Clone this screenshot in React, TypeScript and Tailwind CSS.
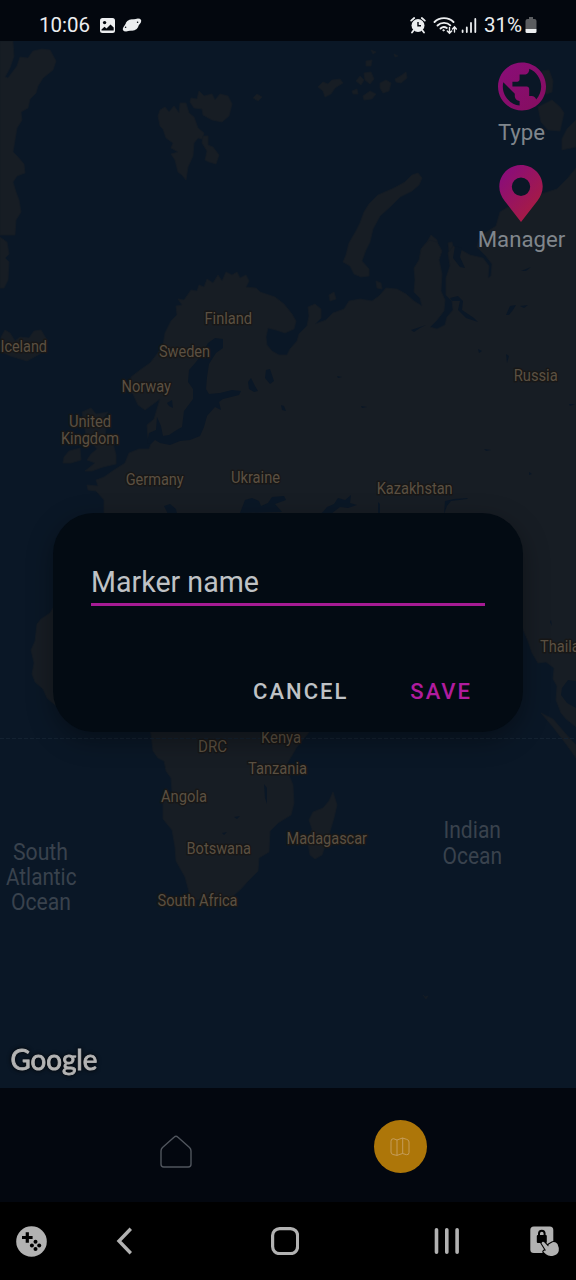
type Label = { text: string; x: number; y: number; w: number };

const COUNTRIES: Label[] = [
  { text: "Finland", x: 204.5, y: 324, w: 47.5 },
  { text: "Iceland", x: 0.5, y: 352, w: 46.5 },
  { text: "Sweden", x: 159, y: 357.4, w: 51 },
  { text: "Norway", x: 121.5, y: 392.3, w: 49.5 },
  { text: "United", x: 69, y: 427, w: 42 },
  { text: "Kingdom", x: 61, y: 444, w: 58 },
  { text: "Germany", x: 125.7, y: 485, w: 58 },
  { text: "Ukraine", x: 231, y: 483.3, w: 49 },
  { text: "Russia", x: 513.7, y: 381, w: 44 },
  { text: "Kazakhstan", x: 376.7, y: 493.5, w: 76 },
  { text: "Thailand", x: 540, y: 652, w: 56 },
  { text: "DRC", x: 198, y: 752, w: 29 },
  { text: "Kenya", x: 261, y: 742.6, w: 40 },
  { text: "Tanzania", x: 248, y: 773.5, w: 59 },
  { text: "Angola", x: 161, y: 802, w: 46 },
  { text: "Botswana", x: 186.5, y: 853.5, w: 64.5 },
  { text: "Madagascar", x: 286.5, y: 844, w: 80.5 },
  { text: "South Africa", x: 157.5, y: 906, w: 80 },
];

const OCEANS: Label[] = [
  { text: "South", x: 13, y: 860, w: 55 },
  { text: "Atlantic", x: 6, y: 885, w: 70.5 },
  { text: "Ocean", x: 11, y: 910, w: 60 },
  { text: "Indian", x: 443.5, y: 838, w: 57.5 },
  { text: "Ocean", x: 442.5, y: 863.5, w: 59.5 },
];

const LAND = [
  // Greenland
  "M0 41H13L14 56L10 68L5 77L8 78L17 66L20 57L28 58L33 51L42 49L50 50L56 61L53 70L43 78L38 86L36 93L30 99L28 108L21 112L22 120L17 128L15 140L13 152L18 157L24 164L25 173L17 176L13 182L16 192L19 200L21 212L16 220L15 235L0 235Z",
  "M0 237L7 242L9 254L5 258L9 262L8 280L4 288L0 288Z",
  // Svalbard
  "M160 110L165 107L169 112L174 106L179 113L180 103L186 103L189 113L194 117L198 128L204 133L202 139L198 138L194 143L193 156L188 167L186 180L182 175L178 172L175 160L171 154L178 152L171 148L173 143L166 138L163 129L160 126L158 116Z",
  "M191 98L197 99L199 91L204 96L212 94L215 100L220 94L228 96L232 104L229 116L222 122L212 120L203 115L202 109L194 108L190 102Z",
  "M203 136L208 136L208 145L213 147L219 155L216 164L209 162L205 160L207 151L202 143Z",
  "M253 98L257 94L262 97L258 101Z",
  // Franz Josef Land
  "M318 87L323 82L328 84L332 80L340 79L343 83L335 88L331 94L325 97L323 91Z",
  "M356 81L360 76L364 80L361 85ZM364 73L371 72L374 79L370 84L365 80ZM380 83L386 80L391 83L389 91L383 93L380 88ZM395 79L402 75L406 72L407 78L401 83L396 82ZM363 96L370 91L376 94L372 99L364 100ZM352 91L357 89L358 94L353 94ZM371 50L376 52L373 54ZM394 54L398 56L395 57ZM366 61L372 60L371 66L366 66Z",
  // Novaya Zemlya
  "M418 173L422 178L419 185L412 191L400 197L390 207L380 216L373 229L370 242L366 250L362 261L369 269L369 276L361 277L354 274L350 266L343 262L346 255L349 243L356 231L360 223L364 212L369 204L378 195L394 188L405 182L412 175Z",
  // Severnaya Zemlya and neighbours
  "M542 71L549 70L553 81L552 92L547 94L540 91L545 84ZM538 107L552 100L560 107L564 113L560 131L548 130L541 122ZM562 139L567 129L576 120V147L562 150Z",
  // Small arctic islands
  "M376 281L381 283L382 289L377 288ZM329 295L334 292L336 299L330 301ZM422 248L427 242L431 235L437 240L438 248ZM448 243L452 242L454 252L450 258Z",
  // Eurasia
  "M87 485L98 486L96 480L104 477L114 470L125 463L129 453L139 449L149 449L151 444L148 438L147 425L154 419L160 399L145 410L138 405L131 390L131 377L140 370L150 363L157 354L163 345L165 333L171 321L177 315L176 306L182 305L178 299L184 300L191 290L197 291L199 285L204 287L207 279L213 283L218 275L222 281L226 272L232 275L237 272L240 278L246 275L249 281L246 287L256 288L260 292L275 297L284 304L292 314L296 321L294 329L285 333L276 330L268 328L266 337L267 345L272 351L279 355L287 355L290 349L297 341L299 334L307 326L309 316L308 307L315 304L321 309L321 318L315 324L326 320L333 313L344 309L349 301L360 299L372 301L379 296L386 288L397 289L406 294L414 301L422 306L420 298L414 292L415 280L414 268L419 260L421 249L429 240L437 242L442 251L439 260L442 274L441 291L445 300L444 311L437 320L430 327L437 329L445 325L447 317L453 310L452 301L446 295L446 278L450 266L448 253L453 246L463 251L470 255L483 258L489 266L488 278L491 276L492 264L485 255L477 247L479 239L485 233L496 226L500 212L508 207L519 211L522 203L532 205L541 194L557 189L567 179L576 168V727L566 719L561 713L556 700L557 686L553 679L554 668L546 662L538 663L532 653L528 641L522 627L500 600H80L104 515V500L96 491L88 490Z",
  // Malay peninsula and Sumatra
  "M541 713L553 719L565 733L576 745V758L566 744L553 727Z",
  // British Isles
  "M64 457L69 451L80 448L81 460L71 463L63 463ZM82 412L91 408L96 414L108 412L102 420L106 429L105 437L113 443L116 455L116 464L103 467L92 471L85 471L95 463L87 460L91 454L97 449L86 435Z",
  // Iceland
  "M1 337L5 330L10 333L15 341L20 337L29 338L34 331L41 330L47 340L46 350L38 355L27 361L10 356L0 351Z",
  // Africa
  "M54 606L50 613L41 619L37 624L35 641L31 650L34 663L32 674L35 682L43 689L47 698L55 705L90 720L147 720L151 734L153 751L158 758L164 761L166 771L171 778L172 792L163 803L163 819L172 830L175 847L176 861L185 877L189 892L194 900L203 899L215 902L232 897L241 889L249 880L258 871L259 858L269 852L270 831L278 823L291 815L294 803L293 785L289 775L287 764L297 747L310 731L330 700L200 560L80 580Z",
  // Madagascar
  "M333 792L337 805L334 818L328 838L322 855L315 859L310 855L308 844L312 829L309 820L313 812L323 808L329 801Z",
  "M423 995L425 997L428 996L426 999Z",
];

const WATER = [
  // Baltic Sea
  "M208 343L215 338L223 339L223 348L216 353L209 364L207 377L206 389L209 394L220 393L232 390L241 391L239 395L231 397L223 399L219 402L221 410L215 407L207 416L204 427L200 436L190 440L180 441L170 445L160 443L155 440L151 444L147 443L149 433L156 430L157 417L161 426L163 436L169 435L175 431L182 427L184 411L193 399L193 389L188 382L189 370L196 362L202 354Z",
  // Northern lakes
  "M248 382L251 378L255 386L258 391L254 392L249 389ZM266 370L270 369L274 381L270 384L265 378ZM281 405L284 406L286 411L282 410ZM167 403L172 400L173 408L169 406Z",
  // Black Sea
  "M240 513L245 500L252 498L259 501L261 506L268 503L272 497L284 496L286 500L275 504L282 512ZM164 506L170 504L176 509L177 514H168Z",
  // Caspian Sea
  "M321 514L327 507L334 504L338 498L345 500L351 495L350 503L357 505L348 508L340 507L331 514ZM378 502L380 504V514L378 513Z",
  // Aral Sea and Balkhash
  "M444 514L445 501L454 499L468 498L467 499L451 501L447 506Z",
  // Rivers and inland lakes
  "M450 298L458 296L463 301L462 310L474 318L478 322L466 318L458 310L460 301L452 301ZM506 315L510 306L516 305L513 310L509 315ZM520 306L528 305L524 308ZM506 354L509 356L507 363ZM411 330L426 325L420 328L414 332ZM455 246L462 248L460 257L465 268L460 267L453 258ZM521 271L531 267L526 271ZM484 449L491 450L486 451ZM337 376L342 377L338 378ZM361 406L367 407L362 408ZM264 784L267 788L267 804L265 798ZM234 817L240 816L237 819ZM222 833L227 832L224 835ZM529 472L532 474L529 475ZM569 404H575L570 406ZM478 349L482 351L479 353Z",
  // Gulf of Thailand
  "M562 688L568 680L576 681V708L567 703L561 695ZM551 620L552 626L550 622Z",
];

function WorldMap() {
  return (
    <svg viewBox="0 41 576 1047" className="block h-full w-full" fontFamily="Roboto, sans-serif">
      <rect x="0" y="41" width="576" height="1047" fill="#0a1726" />
      <g fill="#171d24" stroke="#141c25" strokeWidth="0.8" strokeLinejoin="round">
        {LAND.map((d) => (
          <path key={d} d={d} />
        ))}
      </g>
      <g fill="#0a1726">
        {WATER.map((d) => (
          <path key={d} d={d} />
        ))}
      </g>
      <path d="M0 738.5H576" stroke="#142231" strokeWidth="1" strokeDasharray="4 2" />
      <g fontSize="16" fill="#5b5042" stroke="#171717" strokeWidth="3" strokeLinejoin="round" paintOrder="stroke">
        {COUNTRIES.map((l) => (
          <text key={l.text} x={l.x} y={l.y} textLength={l.w} lengthAdjust="spacingAndGlyphs">
            {l.text}
          </text>
        ))}
      </g>
      <g fontSize="23.5" fill="#39424d">
        {OCEANS.map((l) => (
          <text key={l.text + l.x} x={l.x} y={l.y} textLength={l.w} lengthAdjust="spacingAndGlyphs">
            {l.text}
          </text>
        ))}
      </g>
      <text
        x="10.5"
        y="1069.5"
        className="drop-shadow-[0_0_2px_#000]"
        fontFamily="Lato, sans-serif"
        fontSize="28.5"
        fontWeight="400"
        fill="#b4b4b4"
        stroke="#b4b4b4"
        strokeWidth="0.9"
        textLength="87"
        lengthAdjust="spacingAndGlyphs"
      >
        Google
      </text>
    </svg>
  );
}

function StatusBar() {
  return (
    <header className="flex h-[41px] items-center bg-[#03070e] pt-[9px] pl-[39px] text-[20.5px] leading-none text-[#eceef0]">
      <span className="w-[60px]">10:06</span>
      <svg width="17" height="17" viewBox="0 0 17 17" className="mt-px">
        <rect x="1" y="1" width="15" height="15" rx="2.5" fill="#eceef0" />
        <circle cx="5.6" cy="5.6" r="1.7" fill="#03070e" />
        <path d="M2.5 13.5V12.5L5.5 9.8L7.5 11.5L11.5 7.5L14.7 10.5V13.5Z" fill="#03070e" />
      </svg>
      <svg width="20" height="16" viewBox="0 0 20 16" className="ml-[6px]">
        <ellipse cx="10" cy="8" rx="10.3" ry="4.4" transform="rotate(-30 10 8)" fill="#eceef0" />
        <ellipse cx="10" cy="8" rx="6.6" ry="5.8" fill="#eceef0" />
        <circle cx="3.6" cy="10.2" r="0.8" fill="#03070e" />
        <circle cx="15.6" cy="5.2" r="0.8" fill="#03070e" />
      </svg>
      <svg width="16" height="18" viewBox="0 0 16 18" className="ml-[268px]">
        <circle cx="8" cy="9.5" r="6.5" fill="#eceef0" />
        <path d="M1.2 4.6L4.2 2M14.8 4.6L11.8 2M3.5 14.5L2 16.5M12.5 14.5L14 16.5" stroke="#eceef0" strokeWidth="1.8" strokeLinecap="round" />
        <path d="M8 6V9.8H11" stroke="#03070e" strokeWidth="1.4" fill="none" />
      </svg>
      <svg width="24" height="19" viewBox="0 0 24 19" className="ml-[7px]" fill="none" stroke="#eceef0" strokeWidth="1.9" strokeLinecap="round">
        <path d="M1.5 6C6.5 0.8 15.5 0.8 20.5 6" />
        <path d="M4.5 9.5C8 6 14 6 17.3 9.3" />
        <path d="M7.5 12.5C9.3 10.8 12 10.7 13.8 12" />
        <circle cx="10.5" cy="14.3" r="0.8" fill="#eceef0" strokeWidth="0.6" />
        <path d="M16.5 11.5V17M14.3 15L16.5 17.3L18.7 15M21.5 16V11M19.5 13L21.5 10.8L23.4 13" strokeWidth="1.4" />
      </svg>
      <svg width="16" height="17" viewBox="0 0 16 17" className="ml-[4px]" stroke="#eceef0" strokeWidth="1.8" strokeLinecap="round">
        <path d="M1.6 13.5V15M5.8 10.5V15M10 6V15M14.3 2V15" />
      </svg>
      <span className="ml-[7px] w-[41px]">31%</span>
      <svg width="12" height="18" viewBox="0 0 12 18">
        <path d="M4 1H8V3H9.5Q11.5 3 11.5 5V13H0.5V5Q0.5 3 2.5 3H4Z" fill="#5b5d60" />
        <path d="M0.5 13H11.5V15.5Q11.5 17 10 17H2Q0.5 17 0.5 15.5Z" fill="#eceef0" />
      </svg>
    </header>
  );
}

function MapActions() {
  return (
    <div className="absolute top-[21px] right-0 flex w-[109px] flex-col items-center text-[22.2px] leading-[26px] text-[#80868c]">
      <button className="flex flex-col items-center">
        <svg width="48" height="49" viewBox="2 1.8 20 20.4">
          <defs>
            <linearGradient id="globe" x1="0" y1="0" x2="1" y2="1">
              <stop offset="0" stopColor="#8a0d79" />
              <stop offset="1" stopColor="#850e5e" />
            </linearGradient>
          </defs>
          <path
            fill="url(#globe)"
            d="M12 2C6.48 2 2 6.48 2 12s4.48 10 10 10 10-4.48 10-10S17.52 2 12 2zm-1 17.93c-3.95-.49-7-3.85-7-7.93 0-.62.08-1.21.21-1.79L9 15v1c0 1.1.9 2 2 2v1.93zm6.9-2.54c-.26-.81-1-1.39-1.9-1.39h-1v-3c0-.55-.45-1-1-1H8v-2h2c.55 0 1-.45 1-1V7h2c1.1 0 2-.9 2-2v-.41c2.93 1.19 5 4.06 5 7.41 0 2.08-.8 3.97-2.1 5.39z"
          />
        </svg>
        <span className="mt-[8px]">Type</span>
      </button>
      <button className="mt-5 flex flex-col items-center">
        <svg width="44" height="57" viewBox="0 0 44 57">
          <defs>
            <linearGradient id="pin" x1="0.1" y1="0" x2="0.8" y2="0.8">
              <stop offset="0.1" stopColor="#8a0d79" />
              <stop offset="1" stopColor="#a61b45" />
            </linearGradient>
          </defs>
          <path
            fill="url(#pin)"
            fillRule="evenodd"
            d="M22 0C10 0 0.3 9.6 0.3 21.5C0.3 27 2.3 31.5 5.5 35.8L22 57L38.5 35.8C41.7 31.5 43.7 27 43.7 21.5C43.7 9.6 34 0 22 0ZM22 12.5A9.2 9.2 0 1 1 22 30.9A9.2 9.2 0 1 1 22 12.5Z"
          />
        </svg>
        <span className="mt-[4px]">Manager</span>
      </button>
    </div>
  );
}

function MarkerDialog() {
  return (
    <section
      role="dialog"
      className="absolute top-[472px] left-[53px] flex h-[219px] w-[470px] flex-col rounded-[41px] bg-[#030b13] px-[38px] pt-[50px] shadow-[0_8px_26px_rgba(0,0,0,0.35)]"
    >
      <div className="h-[43px] border-b-[3px] border-[#a61b94] text-[28.6px] leading-[38px] whitespace-nowrap text-[#bfc2c5]">
        Marker name
      </div>
      <div className="mt-[72px] flex justify-end pr-[13px] text-[22px] leading-[28px] font-medium tracking-[2px]">
        <button className="text-[#bfc2c5]">CANCEL</button>
        <button className="ml-[62px] text-[#b01c9e]">SAVE</button>
      </div>
    </section>
  );
}

function TabBar() {
  return (
    <nav className="flex h-[114px] items-start bg-[#03070f] pl-[160px]">
      <svg width="32" height="33" viewBox="0 0 32 33" className="mt-[47px]" fill="none" stroke="#50555d" strokeWidth="1.4" strokeLinejoin="round">
        <path d="M14 2.2Q16 0.3 18 2.2L29.5 12.5Q31 14 31 16V29.3Q31 32 28.3 32H3.7Q1 32 1 29.3V16Q1 14 2.5 12.5Z" />
      </svg>
      <div className="mt-[32px] ml-[181.5px] flex h-[53px] w-[53px] items-center justify-center rounded-full bg-[#ad7609]">
        <svg width="20" height="20" viewBox="0 0 20 20" fill="none" stroke="#c7a263" strokeWidth="0.9" strokeLinejoin="round">
          <path d="M1 4.2Q1 1.7 3.5 1.7L7 3L12.5 1L16.5 2.3Q19 2.8 19 5V15.5Q19 18 16.5 17.7L12.5 16.5L7 18.4L3 17.5Q1 17 1 15ZM7 3V18.4M12.7 1V16.5" />
        </svg>
      </div>
    </nav>
  );
}

function SystemNav() {
  return (
    <footer className="flex h-[78px] items-center bg-black pl-4 text-[#b2b2b2]">
      <svg width="31" height="31" viewBox="0 0 31 31">
        <circle cx="15.5" cy="15.5" r="15.3" fill="currentColor" />
        <path d="M11.3 6.2V16.8M6 11.5H16.6" stroke="#000" strokeWidth="3.2" />
        <g fill="#000">
          <circle cx="19.5" cy="15.8" r="2" />
          <circle cx="15.9" cy="19.4" r="2" />
          <circle cx="23.2" cy="19.4" r="2" />
          <circle cx="19.5" cy="23" r="2" />
        </g>
      </svg>
      <svg width="16" height="28" viewBox="0 0 16 28" className="ml-[68.5px]" fill="none" stroke="currentColor" strokeWidth="3.4">
        <path d="M14.8 1.8L3 14L14.8 26.2" strokeLinejoin="miter" />
      </svg>
      <svg width="28" height="28" viewBox="0 0 28 28" className="ml-[139.5px]" fill="none" stroke="currentColor" strokeWidth="3.2">
        <rect x="1.6" y="1.6" width="25" height="25" rx="7" />
      </svg>
      <svg width="26" height="26" viewBox="0 0 26 26" className="ml-[135px]" stroke="currentColor" strokeWidth="3.6" strokeLinecap="round">
        <path d="M2.5 1.8V24.2M12.8 1.8V24.2M23.1 1.8V24.2" />
      </svg>
      <svg width="30" height="31" viewBox="0 0 30 31" className="ml-[70px]">
        <rect x="0.3" y="0.5" width="23" height="26.5" rx="3.5" fill="currentColor" />
        <rect x="6.8" y="9" width="10" height="8" rx="1" fill="#000" />
        <path d="M9 9.5V7.5A2.8 2.8 0 0 1 14.6 7.5V9.5" fill="none" stroke="#000" strokeWidth="2" />
        <path
          d="M11.5 17.2Q12.5 14.8 14.5 16.5L18.2 20.5L18.7 18.5L22.5 16.3Q25.5 15.5 27.5 18L28.8 22Q29.5 28 24 29.5Q19 31 16 28.2L13.3 25.8Q13.5 24.2 16 24.5Z"
          fill="currentColor"
          stroke="#000"
          strokeWidth="2.2"
          paintOrder="stroke"
        />
      </svg>
    </footer>
  );
}

export default function App() {
  return (
    <div className="flex h-[1280px] w-[576px] flex-col overflow-hidden bg-black font-[Roboto,sans-serif]">
      <StatusBar />
      <main className="relative h-[1047px] shrink-0">
        <WorldMap />
        <MapActions />
        <MarkerDialog />
      </main>
      <TabBar />
      <SystemNav />
    </div>
  );
}
